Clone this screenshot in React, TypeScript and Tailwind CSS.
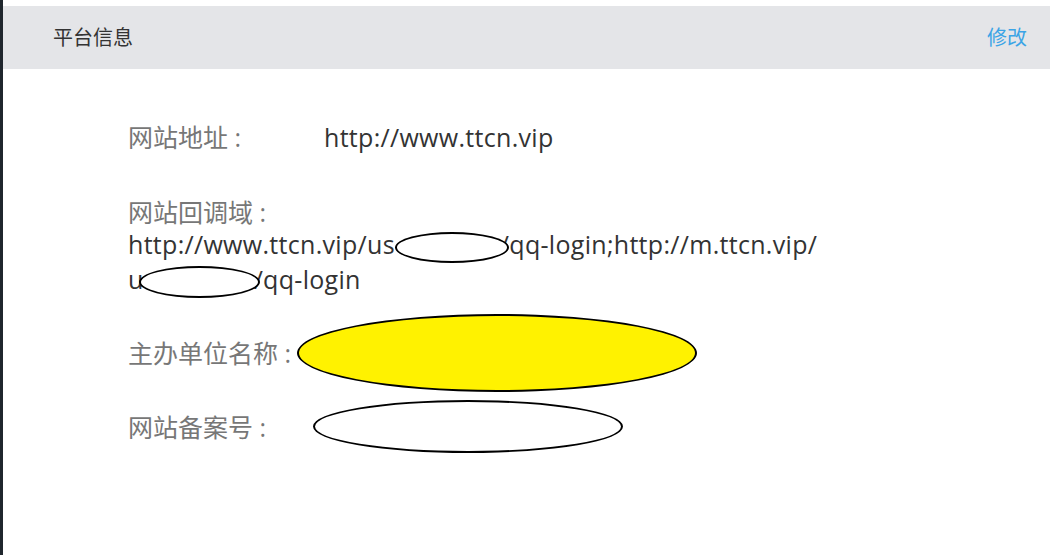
export default function App() {
  return (
    <div
      className="flex h-[555px] w-[1050px] overflow-hidden bg-white"
      style={{ fontFamily: '"Open Sans", "Noto Sans CJK SC", sans-serif' }}
    >
      {/* left edge of the sidebar */}
      <div className="w-[3px] shrink-0 bg-[#1f262d]" />

      <div className="flex flex-1 flex-col pt-[6px]">
        {/* Header */}
        <div className="flex h-[63px] items-center justify-between bg-[#e4e5e8] pl-[50px] pr-[23px]">
          <span className="text-[20px] text-[#333]">平台信息</span>
          <span className="text-[20px] text-[#3ba4e6]">修改</span>
        </div>

        {/* Content */}
        <div className="flex flex-col pl-[125px] pt-[52px] text-[25px] leading-[32px]">
          <div className="flex items-center">
            <span className="w-[196px] text-[#777]">网站地址 :</span>
            <span className="tracking-[0.3px] text-[#333]">http://www.ttcn.vip</span>
          </div>

          <div className="mt-[43px] flex flex-col">
            <span className="text-[#777]">网站回调域 :</span>
            <span className="tracking-[0.3px] text-[#333]">
              http://www.ttcn.vip/us
              <span className="relative z-10 mr-[-9px] inline-block h-[31px] w-[114px] rounded-[50%] border-2 border-black bg-white align-middle" />
              /qq-login;http://m.ttcn.vip/
            </span>
            <span className="tracking-[0.3px] text-[#333]">
              u
              <span className="relative z-10 ml-[-5px] mr-[-6px] inline-block h-[32px] w-[121px] rounded-[50%] border-2 border-black bg-white align-middle" />
              /qq-login
            </span>
          </div>

          <div className="mt-[16px] flex items-center">
            <span className="text-[#777]">主办单位名称 :</span>
            <span className="ml-[6px] inline-block h-[78px] w-[400px] rounded-[50%] border-2 border-black bg-[#fff200]" />
          </div>

          <div className="mt-[8px] flex items-center">
            <span className="text-[#777]">网站备案号 :</span>
            <span className="ml-[47px] inline-block h-[53px] w-[310px] rounded-[50%] border-2 border-black bg-white" />
          </div>
        </div>
      </div>
    </div>
  )
}
